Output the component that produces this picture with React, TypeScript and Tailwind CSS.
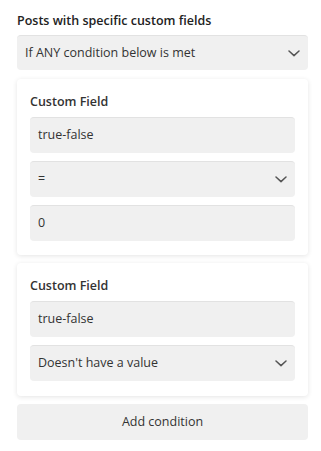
import React from "react";

const Chevron = () => (
  <svg width="12" height="7" viewBox="0 0 12 7" fill="none" className="shrink-0">
    <path d="M1 1 L6 5.6 L11 1" stroke="#555" strokeWidth="1.5" strokeLinecap="round" strokeLinejoin="round" />
  </svg>
);

const Field = ({ children, select }: { children: React.ReactNode; select?: boolean }) => (
  <div className="flex h-[36px] items-center justify-between rounded-[4px] border-t border-t-[#e2e2e2] bg-[#f0f0f0] pl-[8px] pr-[8px] text-[12.5px] text-[#333]">
    <span>{children}</span>
    {select && <Chevron />}
  </div>
);

const Card = ({ children, pb }: { children: React.ReactNode; pb?: string }) => (
  <div className={`flex flex-col rounded-[4px] bg-white px-[13px] pt-[14px] shadow-[0_1px_5px_rgba(0,0,0,0.11)] ${pb === "15" ? "pb-[15px]" : "pb-[14px]"}`}>
    <div className="mb-[6px] text-[12.5px] font-semibold leading-[18px] text-[#333]">Custom Field</div>
    <div className="flex flex-col gap-[8px]">{children}</div>
  </div>
);

export default function App() {
  return (
    <div
      className="min-h-[451px] w-[321px] bg-white pl-[17px] pr-[13px] pt-[12px]"
      style={{ fontFamily: '"Open Sans", "Noto Sans", sans-serif' }}
    >
      <div className="mb-[5px] text-[12.5px] font-semibold leading-[18px] text-[#222]">
        Posts with specific custom fields
      </div>
      <div className="flex flex-col gap-[8px]">
        <div className="flex h-[35px] items-center justify-between rounded-[4px] border-t border-t-[#e2e2e2] bg-[#f0f0f0] pl-[8px] pr-[8px] text-[12.5px] text-[#333]">
          <span>If ANY condition below is met</span>
          <Chevron />
        </div>
        <div className="mt-[1px]">
          <Card>
            <Field>true-false</Field>
            <Field select>=</Field>
            <Field>0</Field>
          </Card>
        </div>
        <Card pb="15">
          <Field>true-false</Field>
          <Field select>Doesn't have a value</Field>
        </Card>
        <div className="flex h-[36px] items-center justify-center rounded-[4px] bg-[#f0f0f0] text-[12.5px] text-[#333]">
          Add condition
        </div>
      </div>
    </div>
  );
}
